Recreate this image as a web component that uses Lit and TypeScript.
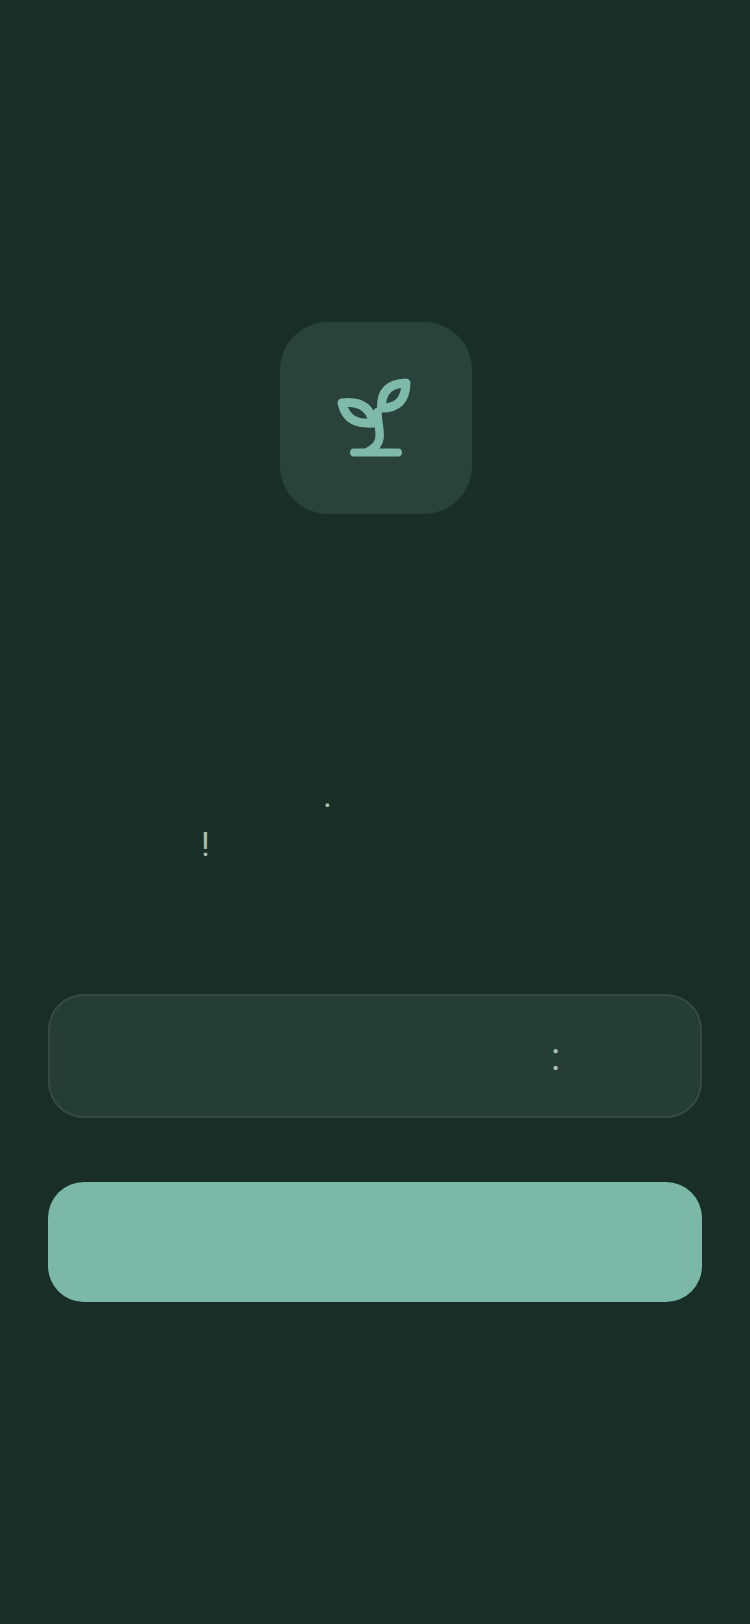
import { LitElement, html, css } from 'lit';
import { customElement } from 'lit/decorators.js';

@customElement('app-root')
export class AppRoot extends LitElement {
  static styles = css`
    :host {
      display: block;
      min-height: 1624px;
      background: #1a2e28;
      font-family: Roboto, "Liberation Sans", sans-serif;
      color: #a9bdb6;
    }

    .page {
      display: flex;
      flex-direction: column;
      padding: 322px 48px 0;
    }

    .logo {
      width: 192px;
      height: 192px;
      margin-left: 232px;
      border-radius: 48px;
      background: #29433b;
    }

    .logo svg {
      display: block;
    }

    .copy {
      display: flex;
      flex-direction: column;
      margin-top: 261px;
    }

    .line-a {
      height: 49px;
      padding-left: 275px;
      font-size: 34px;
      line-height: 40px;
    }

    .line-b {
      height: 40px;
      padding-left: 153px;
      font-size: 34px;
      line-height: 40px;
    }

    .card {
      display: flex;
      align-items: center;
      box-sizing: border-box;
      height: 124px;
      margin-top: 130px;
      padding: 2px 0 0 501px;
      border: 2px solid #364a43;
      border-radius: 36px;
      background: #263d35;
      font-size: 38px;
    }

    .action {
      height: 120px;
      margin-top: 64px;
      border-radius: 36px;
      background: #7cb8a7;
    }
  `;

  render() {
    return html`
      <div class="page">
        <div class="logo">
          <svg width="192" height="192" viewBox="0 0 192 192" fill="none"
            stroke="#7fb9a7" stroke-width="9" stroke-linecap="round" stroke-linejoin="round">
            <path stroke-width="8" d="M74 130.5H118" />
            <path d="M126 61C111 61.5 101 68 101.5 86C118 86 125.5 78 126 61Z" />
            <path d="M62 81C78 79 90 84 93.5 101C78 102 66 99 62 81Z" />
            <path stroke-width="8.5" d="M97.5 90C97.5 100 100.5 108 99.5 116C99 121 95 126 89 129" />
          </svg>
        </div>
        <div class="copy">
          <div class="line-a">.</div>
          <div class="line-b">!</div>
        </div>
        <div class="card">:</div>
        <div class="action"></div>
      </div>
    `;
  }
}
